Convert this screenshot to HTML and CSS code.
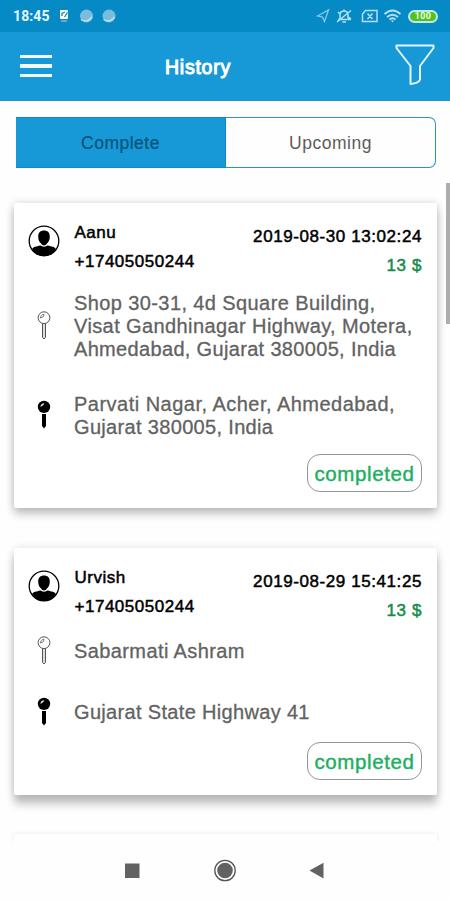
FILE: index.html
```html
<!DOCTYPE html>
<html lang="en">
<head>
<meta charset="utf-8">
<title>History</title>
<link rel="stylesheet" href="styles.css">
</head>
<body>
<svg width="0" height="0" class="defs">
  <symbol id="user" viewBox="0 0 32 32">
    <circle cx="16" cy="16" r="14.8" fill="#fff" stroke="#000" stroke-width="1.3"/>
    <path d="M10.2 11.5C10.2 7.500 12.500 5.500 16 5.500S21.800 7.500 21.800 11.500C21.800 15 20.500 17.500 18.700 18.800V20.300C21.500 21.300 26 21.300 28 24C25.500 28.500 21 31 16 31S6.500 28.500 4 24C6 21.300 10.500 21.300 13.300 20.300V18.800C11.500 17.500 10.200 15 10.200 11.500Z"/>
    <path d="M12.300 19.300Q16 23 19.700 19.300" fill="none" stroke="#fff" stroke-width="1.300"/>
  </symbol>
  <symbol id="pin-open" viewBox="0 0 14 29">
    <path d="M5.500 12.500V26.500L7 28L8.500 26.500V12.500" fill="#ddd" stroke="#555" stroke-width="1"/>
    <circle cx="7" cy="6.700" r="5.900" fill="#fff" stroke="#555" stroke-width="1"/>
    <path d="M3.500 7A3.500 3.500 0 0 1 7 3.300L6.500 5.500Z" fill="#fff" stroke="#555" stroke-width=".8"/>
  </symbol>
  <symbol id="pin-solid" viewBox="0 0 14 29">
    <circle cx="7" cy="6.900" r="6.200"/>
    <path d="M5 14H9V26L7 28.500L5 26Z"/>
    <path d="M3.700 6.500Q4 3.800 6.800 3.500L6 5Z" fill="#fff" stroke="#fff" stroke-width=".5"/>
  </symbol>
</svg>
<div class="screen">
  <div class="status">
    <span class="clock">18:45</span>
    <svg class="notices" width="62" height="18" viewBox="0 0 62 18">
      <rect x="3" y="3" width="8" height="9" rx="1" fill="#fff"/>
      <path d="M5 9V6.500L8 5M7.500 10L10.500 5.500" fill="none" stroke="#1680b5" stroke-width="1.300"/>
      <path d="M4 14H10" stroke="#a5d5ed"/>
      <circle cx="29.500" cy="9" r="6.500" fill="#79bddd"/><path d="M24 12.500Q30 16.500 35 10" fill="none" stroke="#b9e2f5" stroke-width="1.500"/>
      <circle cx="52" cy="9" r="6.500" fill="#79bddd"/><path d="M46.500 12.500Q52.500 16.500 57.500 10" fill="none" stroke="#b9e2f5" stroke-width="1.500"/>
    </svg>
    <svg class="signals" width="86" height="18" viewBox="0 0 86 18" fill="none" stroke="#b4e0f6" stroke-width="1.500">
      <path d="M1.500 9L12.500 3L8.500 14.500L6.500 10Z" stroke="#86c8e8" stroke-width="1.300"/>
      <path d="M24 12.500V7.500Q24.500 4 28 4T32 7.500V12.500H35M22 12.500H31M26.500 15H30M21 15L35 3.500M32.500 10L35 12M22 5L24 7M28 4V2.500"/>
      <path d="M46.500 7L49.500 3.500H61V14.500H46.500ZM51.500 6.500L56.500 12M56.500 6.500L51.500 12"/>
      <path d="M68.500 7Q76.500 0 84.500 7M71 10Q76.500 5.500 82 10M73.500 12.500Q76.500 10 79.500 12.500" stroke-width="2"/>
      <path d="M75 13.500L76.500 15.500L78 13.500Z" fill="#b4e0f6" stroke="none"/>
    </svg>
    <span class="battery">100</span>
  </div>
  <header class="bar">
    <div class="menu"><i></i><i></i><i></i></div>
    <h1>History</h1>
    <svg class="filter" width="40" height="42" viewBox="0 0 40 42" fill="none" stroke="#e4f5ff" stroke-width="2" stroke-linejoin="round">
      <path d="M1.500 1.500H38.500V4L25 22V35.500Q24 39 15.500 40V22L1.500 4Z"/>
    </svg>
  </header>
  <main class="list">
    <nav class="tabs"><span class="tab active">Complete</span><span class="tab">Upcoming</span></nav>
    <article class="card">
      <div class="head">
        <svg class="avatar"><use href="#user"/></svg>
        <div class="person"><b>Aanu</b><b>+17405050244</b></div>
        <div class="meta"><b class="date">2019-08-30 13:02:24</b><b class="price">13 $</b></div>
      </div>
      <div class="place"><svg class="pin"><use href="#pin-open"/></svg><p><span class="loose">Shop 30-31, 4d Square Building,<br>Visat Gandhinagar Highway, Motera,</span><br>Ahmedabad, Gujarat 380005, India</p></div>
      <div class="place"><svg class="pin"><use href="#pin-solid"/></svg><p><span class="looser">Parvati Nagar, Acher, Ahmedabad,</span><br>Gujarat 380005, India</p></div>
      <span class="badge">completed</span>
    </article>
    <article class="card deep">
      <div class="head">
        <svg class="avatar"><use href="#user"/></svg>
        <div class="person"><b>Urvish</b><b>+17405050244</b></div>
        <div class="meta"><b class="date">2019-08-29 15:41:25</b><b class="price">13 $</b></div>
      </div>
      <div class="place"><svg class="pin"><use href="#pin-open"/></svg><p><span class="loose">Sabarmati Ashram</span></p></div>
      <div class="place"><svg class="pin"><use href="#pin-solid"/></svg><p>Gujarat State Highway 41</p></div>
      <span class="badge">completed</span>
    </article>
    <div class="card next"></div>
    <div class="scrollbar"></div>
  </main>
  <footer class="keys">
    <svg width="450" height="59" viewBox="0 0 450 59" fill="#626262">
      <rect x="125" y="22.500" width="14.500" height="14.500"/>
      <circle cx="225" cy="29.500" r="7.800"/><circle cx="225" cy="29.500" r="10.200" fill="none" stroke="#555" stroke-width="1.300"/>
      <path d="M309.500 29.500L323.500 21.800V37.500Z"/>
    </svg>
  </footer>
</div>
</body>
</html>
```
FILE: styles.css
```css
* { box-sizing: border-box; }
body { margin: 0; font-family: "Liberation Sans", Arial, sans-serif; background: #fefefe; }
.defs { position: absolute; }
.screen { width: 450px; height: 900px; display: flex; flex-direction: column; overflow: hidden; }
.status { height: 32px; flex: none; background: #068ac6; display: flex; align-items: center; padding: 0 12px 0 13px; }
.clock { font: 700 14px Roboto, sans-serif; color: #e8f7ff; width: 36px; letter-spacing: .1px; }
.notices { margin-left: 8px; }
.signals { margin-left: auto; }
.battery { width: 30px; height: 13px; margin-left: 6px; border: 2px solid #c5e8e5; border-radius: 7px; background: #4fc321; color: #f0ffe0; font: 700 9px/9px Roboto, sans-serif; text-align: center; letter-spacing: .4px; }
.bar { height: 69px; flex: none; background: #1798d7; border-bottom: 1px solid #2b90cf; display: flex; align-items: center; padding: 0 15px 0 20px; }
.menu { width: 32px; display: grid; gap: 6px; }
.menu i { height: 3.5px; background: #f4fbff; }
h1 { margin: 1px 0 0 113px; font-size: 19.5px; font-weight: 400; line-height: 24px; letter-spacing: .75px; color: #fff; -webkit-text-stroke: 1px #fff; }
.filter { margin-left: auto; margin-top: -2px; }
.list { position: relative; flex: 1; min-height: 0; overflow: hidden; padding: 16px 13px 0 14px; }
.tabs { display: flex; height: 50.5px; margin: 0 1px 35.500px 2px; }
.tab { flex: 1; display: flex; align-items: center; justify-content: center; padding-top: 2px; font-size: 17.5px; letter-spacing: .5px; color: #5c5c5c; border: 1.5px solid #2b91d0; border-left: 0; border-radius: 0 7px 7px 0; }
.tab.active { background: #1798d7; border-color: #0c8aca; border-radius: 0; color: #075377; -webkit-text-stroke: .2px #075377; }
.card { background: #fff; height: 305px; margin-bottom: 40px; padding: 0 15px; border-radius: 2px; box-shadow: 0 0 8px rgba(0,0,0,.14), 0 6px 10px rgba(0,0,0,.22); }
.card.deep { height: 247px; margin-bottom: 39px; box-shadow: 0 0 8px rgba(0,0,0,.12), 0 9px 9px rgba(0,0,0,.24); }
.card.next { box-shadow: 0 0 4px rgba(0,0,0,.1); }
.head { display: flex; height: 88px; }
.avatar { width: 32px; height: 32px; margin: 21.500px 0 0 -1px; }
.person, .meta { display: flex; flex-direction: column; font-size: 17px; line-height: 29px; }
.person { margin: 15px 0 0 14.5px; letter-spacing: .52px; }
.meta { margin: 19px 0 0 auto; text-align: right; letter-spacing: .58px; }
.head b { font-weight: 400; color: #000; -webkit-text-stroke: .5px currentColor; }
.head .price { color: #158d49; }
.place { min-height: 29px; display: flex; align-items: center; margin-bottom: 31.500px; }
.pin { width: 14px; height: 29px; margin-left: 8px; flex: none; }
.place p { margin: 1px 0 -1px 23px; font-size: 20px; line-height: 23px; letter-spacing: .33px; white-space: nowrap; color: #626262; -webkit-text-stroke: .3px #626262; }
.loose { letter-spacing: .4px; }
.looser { letter-spacing: .48px; }
.badge { display: flex; align-items: center; justify-content: center; width: 115px; height: 38.5px; padding-top: 2px; margin: -15.500px 0 0 auto; border: 1.3px solid #949494; border-radius: 13px; color: #20ae60; font-size: 20.5px; letter-spacing: .6px; -webkit-text-stroke: .4px #20ae60; }
.scrollbar { position: absolute; right: 0; top: 82px; width: 4px; height: 141px; background: #adadad; }
.keys { height: 59px; flex: none; background: #fefefe; }
.keys svg { display: block; }
```
